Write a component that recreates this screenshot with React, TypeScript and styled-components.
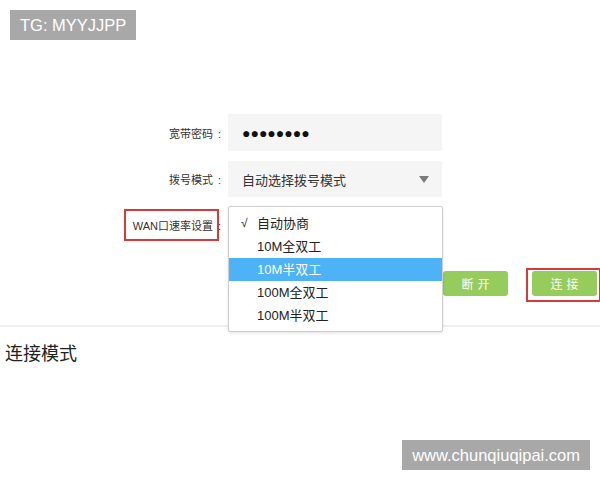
import React from "react";
import styled, { createGlobalStyle } from "styled-components";

const GlobalStyle = createGlobalStyle`
  body {
    margin: 0;
    background: #ffffff;
    font-family: "Liberation Sans", "Noto Sans CJK SC", sans-serif;
    color: #333333;
  }
`;

const Page = styled.div`
  position: relative;
  width: 600px;
  height: 480px;
  overflow: hidden;
  background: #ffffff;
`;

const Stamp = styled.div<{ $top?: number; $left?: number; $bottom?: number; $right?: number }>`
  position: absolute;
  ${(p) => (p.$top !== undefined ? `top: ${p.$top}px;` : "")}
  ${(p) => (p.$left !== undefined ? `left: ${p.$left}px;` : "")}
  ${(p) => (p.$bottom !== undefined ? `bottom: ${p.$bottom}px;` : "")}
  ${(p) => (p.$right !== undefined ? `right: ${p.$right}px;` : "")}
  height: 30px;
  padding: 0 10px;
  display: flex;
  align-items: center;
  background: #a8a8a8;
  color: #ffffff;
  font-size: 16.5px;
  z-index: 5;
`;

const Form = styled.div`
  padding-top: 114px;
  display: flex;
  flex-direction: column;
  gap: 10px;
`;

const Row = styled.div<{ $height: number }>`
  position: relative;
  display: grid;
  grid-template-columns: 228px 214px;
  height: ${(p) => p.$height}px;
  align-items: center;
`;

const Label = styled.div`
  justify-self: end;
  padding-right: 7px;
  font-size: 11px;
  color: #333333;
`;

const Colon = styled.span`
  margin-left: 5px;
`;

const Field = styled.div<{ $blank?: boolean }>`
  height: 100%;
  background: ${(p) => (p.$blank ? "#ffffff" : "#f5f5f5")};
  display: flex;
  align-items: center;
  padding: 0 14px;
  box-sizing: border-box;
  font-size: 13px;
  color: #333333;
  position: relative;
`;

const Dots = styled.span`
  font-size: 14px;
  color: #111111;
`;

const Caret = styled.span`
  position: absolute;
  right: 13px;
  top: 50%;
  margin-top: -3px;
  width: 0;
  height: 0;
  border-left: 5px solid transparent;
  border-right: 5px solid transparent;
  border-top: 7px solid #7a7a7a;
`;

// red outline around the speed setting label
const Mark = styled.span`
  position: absolute;
  left: 124px;
  top: 2px;
  width: 95px;
  height: 32px;
  border: 2px solid #d23c3e;
  box-sizing: border-box;
`;

const Dropdown = styled.ul`
  position: absolute;
  top: -1px;
  left: 0;
  width: 215px;
  margin: 0;
  padding: 5px 0 4px;
  list-style: none;
  background: #ffffff;
  border: 1px solid #cfcfcf;
  border-radius: 2px;
  box-shadow: 0 1px 3px rgba(0, 0, 0, 0.12);
  box-sizing: border-box;
  z-index: 3;
`;

const Option = styled.li<{ $active?: boolean }>`
  position: relative;
  height: 23px;
  line-height: 23px;
  padding-left: 28px;
  font-size: 13px;
  color: ${(p) => (p.$active ? "#ffffff" : "#222222")};
  background: ${(p) => (p.$active ? "#4db2f6" : "transparent")};
`;

const Check = styled.span`
  position: absolute;
  left: 12px;
  font-size: 12px;
`;

const Actions = styled.div`
  display: flex;
  gap: 24px;
  padding-left: 443px;
  margin-top: 28px;
`;

const Btn = styled.div`
  position: relative;
  width: 65px;
  height: 25px;
  border-radius: 3px;
  background: #96cc5c;
  color: #ffffff;
  font-size: 12px;
  letter-spacing: 4px;
  text-indent: 4px;
  display: flex;
  align-items: center;
  justify-content: center;
`;

const BtnMark = styled.span`
  position: absolute;
  left: -6px;
  top: -3px;
  width: 75px;
  height: 34px;
  border: 2px solid #d23c3e;
  box-sizing: border-box;
`;

const Divider = styled.div`
  margin-top: 29px;
  height: 2px;
  background: #efefef;
`;

const Section = styled.h2`
  margin: 12px 0 0 5px;
  font-size: 18px;
  font-weight: normal;
  color: #222222;
`;

const speeds = ["自动协商", "10M全双工", "10M半双工", "100M全双工", "100M半双工"];

export default function App() {
  return (
    <Page>
      <GlobalStyle />
      <Stamp $top={10} $left={10}>TG: MYYJJPP</Stamp>
      <Form>
        <Row $height={37}>
          <Label>
            宽带密码<Colon>:</Colon>
          </Label>
          <Field>
            <Dots>●●●●●●●●</Dots>
          </Field>
        </Row>
        <Row $height={36}>
          <Label>
            拨号模式<Colon>:</Colon>
          </Label>
          <Field>
            自动选择拨号模式
            <Caret />
          </Field>
        </Row>
        <Row $height={36}>
          <Label>
            WAN口速率设置<Colon>:</Colon>
          </Label>
          <Mark />
          <Field $blank>
            <Dropdown>
              {speeds.map((s, i) => (
                <Option key={s} $active={i === 2}>
                  {i === 0 && <Check>√</Check>}
                  {s}
                </Option>
              ))}
            </Dropdown>
          </Field>
        </Row>
      </Form>
      <Actions>
        <Btn>断开</Btn>
        <Btn>
          连接
          <BtnMark />
        </Btn>
      </Actions>
      <Divider />
      <Section>连接模式</Section>
      <Stamp $bottom={10} $right={10}>www.chunqiuqipai.com</Stamp>
    </Page>
  );
}
